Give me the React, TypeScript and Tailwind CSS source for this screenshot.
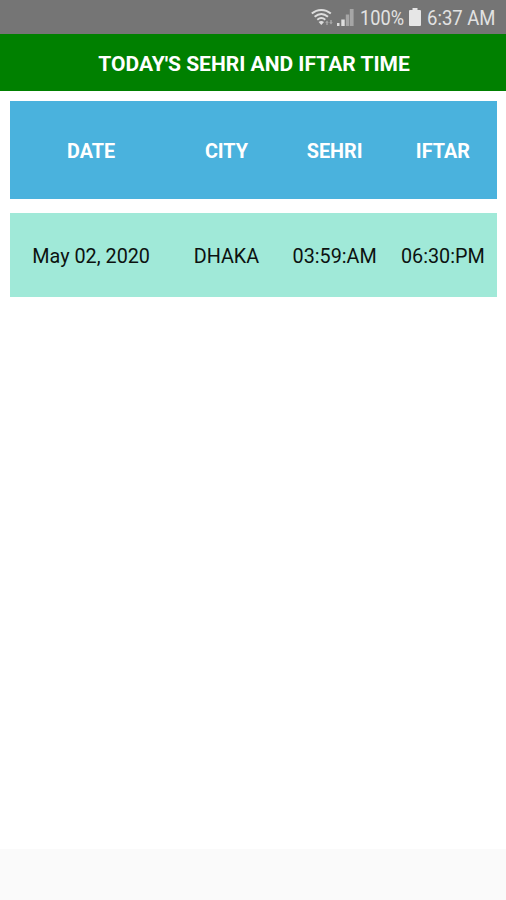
const columns = ["DATE", "CITY", "SEHRI", "IFTAR"];
const today = ["May 02, 2020", "DHAKA", "03:59:AM", "06:30:PM"];

function WifiIcon() {
  return (
    <svg width="23" height="18" viewBox="0 0 23 18" fill="none" stroke="#dedede">
      <path d="M0.8 5.6C6.3 0.8 14.3 0.8 19.8 5.6" strokeWidth="2" />
      <path d="M3.6 8.8C7.8 5.2 12.8 5.2 17 8.8" strokeWidth="2" />
      <path d="M6.3 11.8C8.8 9.6 11.8 9.6 14.3 11.8" strokeWidth="1.8" />
      <path d="M7.6 14C9.4 12.5 11.2 12.5 13 14L10.3 17Z" fill="#dedede" stroke="none" />
      <path d="M14.2 14.8L16 12.5L17.8 14.8H16.7V17H15.3V14.8Z" fill="#a8a8a8" stroke="none" />
      <path d="M18.2 14.2H19.3V12H20.7V14.2H21.8L20 16.6Z" fill="#a8a8a8" stroke="none" />
    </svg>
  );
}

function SignalIcon() {
  return (
    <svg width="17" height="17" viewBox="0 0 17 17">
      <rect x="0" y="14" width="2.5" height="3" fill="#dedede" />
      <rect x="4.3" y="10.5" width="3.4" height="6.5" fill="#dedede" />
      <rect x="8.8" y="5.5" width="3.4" height="11.5" fill="#a6a6a6" />
      <rect x="12.8" y="0" width="3.8" height="17" fill="#a6a6a6" />
    </svg>
  );
}

function BatteryIcon() {
  return (
    <svg width="12" height="18" viewBox="0 0 12 18" fill="#e6e6e6">
      <path d="M3.5 0H8.5V2H11Q12 2 12 3V17Q12 18 11 18H1Q0 18 0 17V3Q0 2 1 2H3.5Z" />
    </svg>
  );
}

export default function App() {
  return (
    <div className="flex h-[900px] w-[506px] flex-col bg-white font-['Roboto',sans-serif] text-[20px] leading-6">
      <div className="flex h-[34px] items-center bg-[#757575] pl-[311px] text-[#e2e2e2]">
        <WifiIcon />
        <div className="ml-[3px]">
          <SignalIcon />
        </div>
        <div className="ml-[6px] w-[44px] pt-[2px]">
          <span className="inline-block origin-left scale-x-[0.91] whitespace-nowrap">100%</span>
        </div>
        <div className="ml-[5px]">
          <BatteryIcon />
        </div>
        <div className="ml-[6px] pt-[2px]">
          <span className="inline-block origin-left scale-x-[0.925] whitespace-nowrap">6:37 AM</span>
        </div>
      </div>
      <header className="flex h-[57px] items-center justify-center bg-[#008000] pt-[2px] pl-[2px] text-[21px] font-bold text-white">
        TODAY'S SEHRI AND IFTAR TIME
      </header>
      <main className="flex-1 pt-[10px] pr-[9px] pl-[10px]">
        <div className="grid h-[98px] grid-cols-[1.5fr_1fr_1fr_1fr] items-center bg-[#4ab2dd] pt-[4px] text-center text-[19.8px] font-bold text-white">
          {columns.map((c) => (
            <div key={c}>{c}</div>
          ))}
        </div>
        <div className="mt-[14px] grid h-[84px] grid-cols-[1.5fr_1fr_1fr_1fr] items-center bg-[#a0e9d8] pt-[4px] text-center text-[19.8px] text-[#0c1210]">
          {today.map((t) => (
            <div key={t}>{t}</div>
          ))}
        </div>
      </main>
      <footer className="h-[51px] bg-[#fafafa]" />
    </div>
  );
}
